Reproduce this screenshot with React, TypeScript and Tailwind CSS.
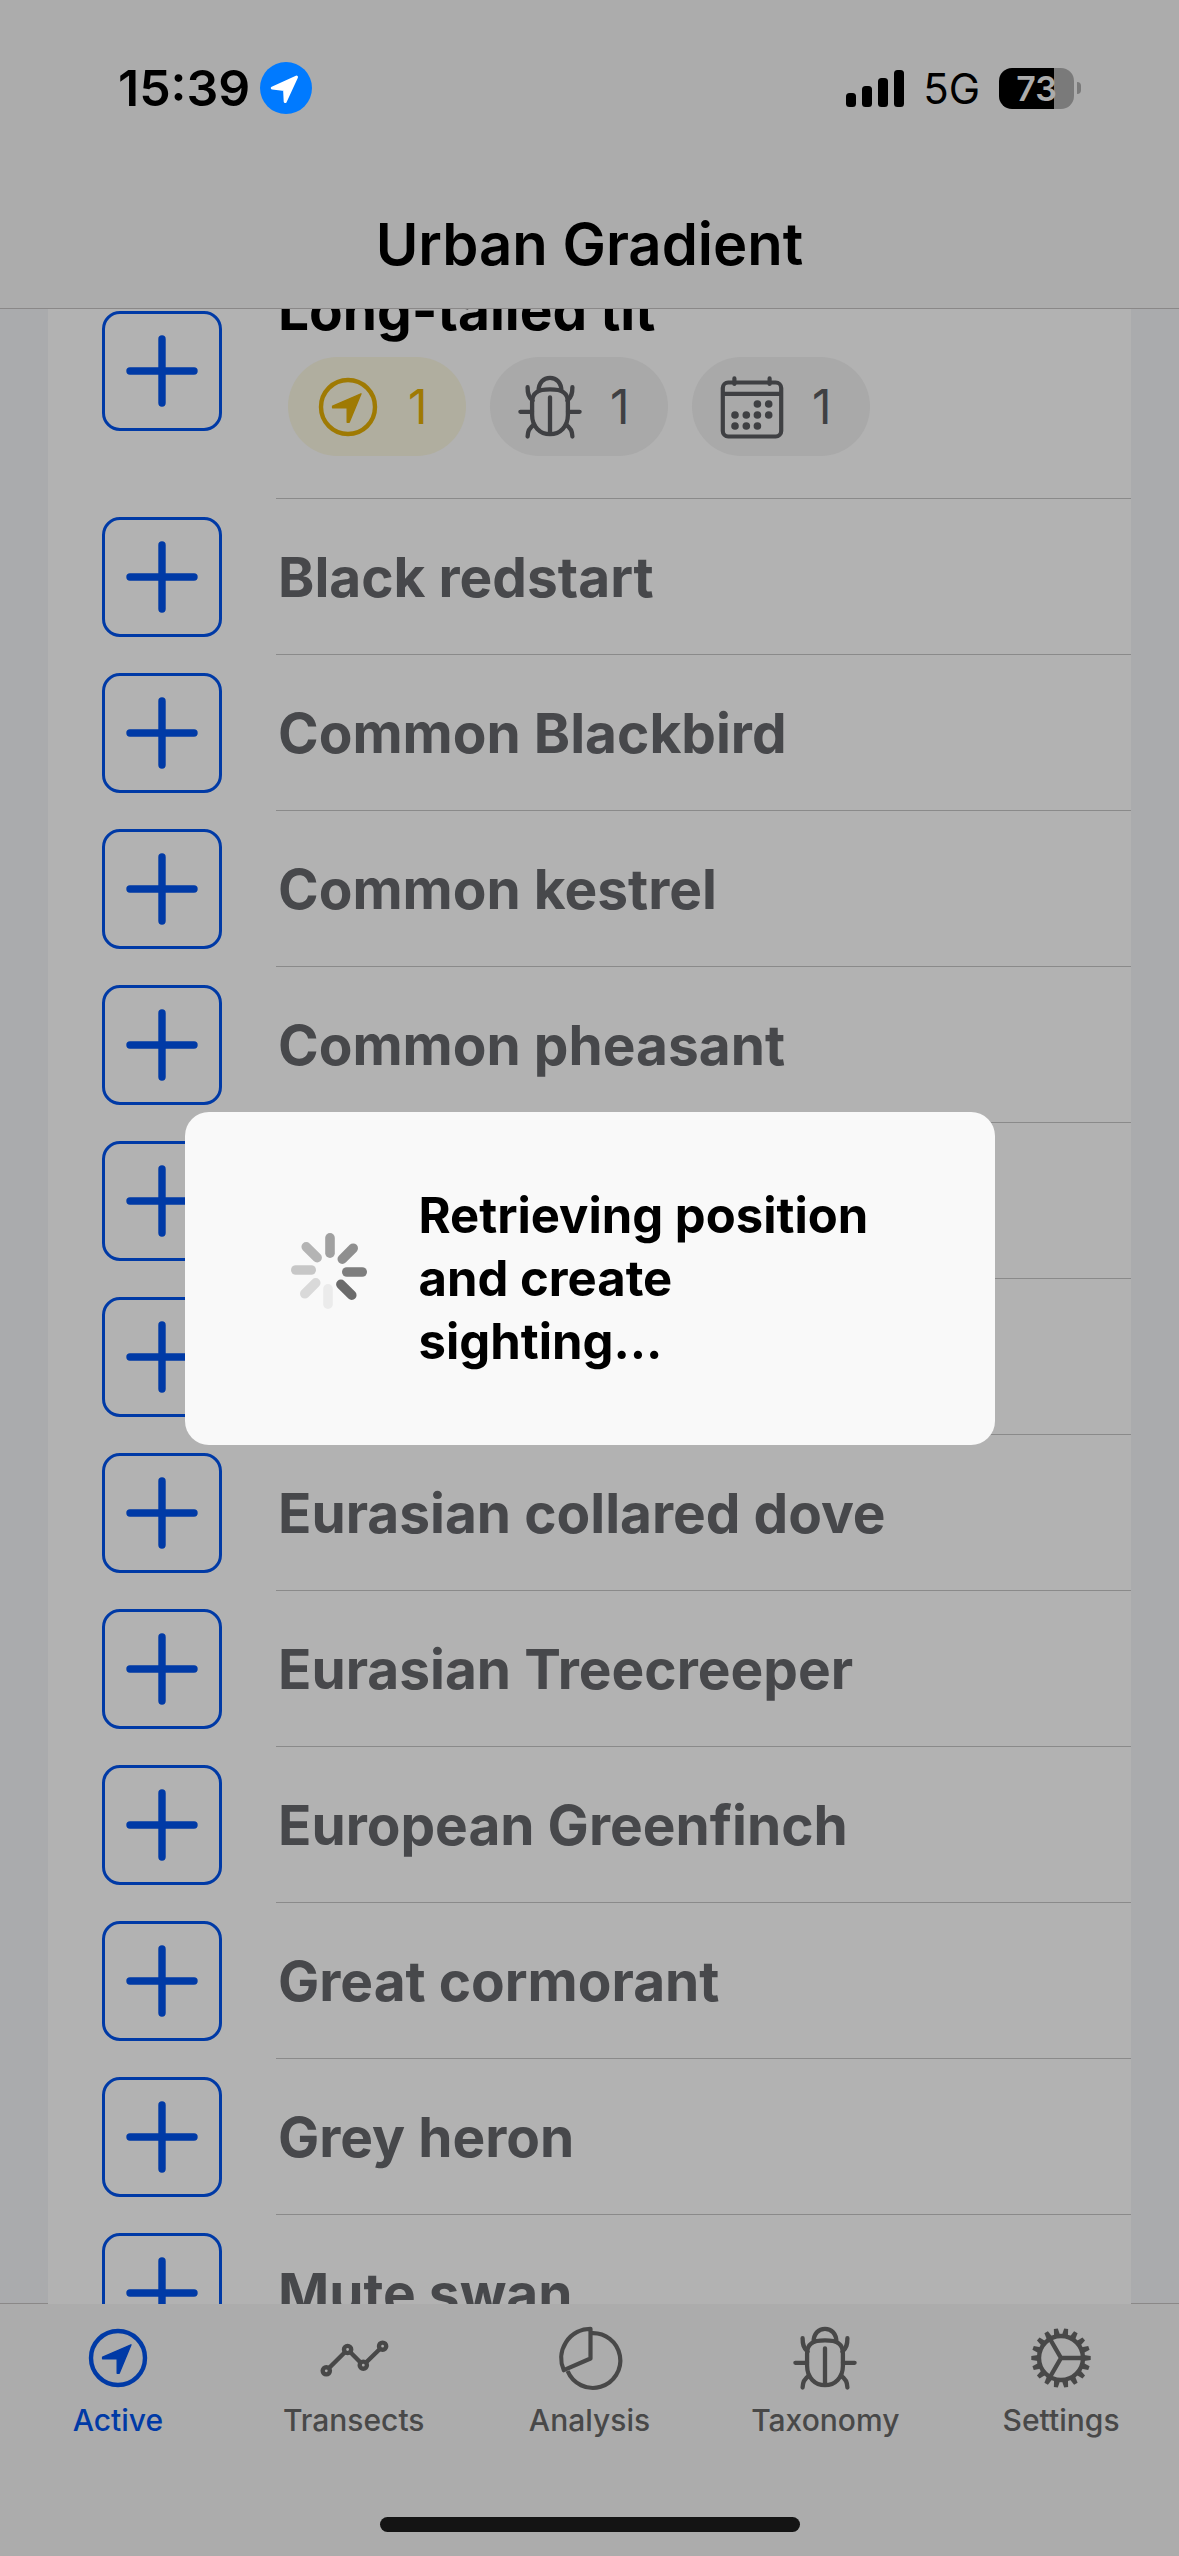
import type { ReactNode } from "react";

type IconProps = { className?: string };

function NavigationCircle({ className = "" }: IconProps) {
  return (
    <svg viewBox="0 0 64 64" className={`size-16 ${className}`} fill="none" stroke="currentColor" aria-hidden="true">
      <circle cx="32" cy="32" r="27" strokeWidth="4.4" />
      <path d="M45 18.8 16.6 31.2V32.8H31.2V47.2H33.2Z" fill="currentColor" strokeWidth="1.4" strokeLinejoin="round" />
    </svg>
  );
}

function Beetle({ className = "" }: IconProps) {
  return (
    <svg
      viewBox="0 0 64 64"
      className={`size-16 ${className}`}
      fill="none"
      stroke="currentColor"
      strokeWidth="4.3"
      strokeLinecap="round"
      strokeLinejoin="round"
      aria-hidden="true"
    >
      <path d="M20.6 16C20.6 7.6 25.6 2.8 32 2.8S43.4 7.6 43.4 16" />
      <path d="M14.1 27.5C14.1 17.5 20 14.4 32 14.4S49.9 17.5 49.9 27.5V40C49.9 51.5 42 59.2 32 59.2S14.1 51.5 14.1 40Z" />
      <path d="M32 22.3V58M2.4 36.8H14M50 36.8H61.6" />
      <path d="M9.6 12.2C9.6 18.5 10.4 22 14.6 25.6M54.4 12.2C54.4 18.5 53.6 22 49.4 25.6" />
      <path d="M9.6 61.6C9.6 56 11.6 52.4 16.2 49.6M54.4 61.6C54.4 56 52.4 52.4 47.8 49.6" />
    </svg>
  );
}

const calendarDots = [
  [37.4, 29],
  [48.7, 29],
  [15, 40],
  [26.3, 40],
  [37.4, 40],
  [48.7, 40],
  [15, 51],
  [26.3, 51],
  [37.4, 51],
];

function Calendar({ className = "" }: IconProps) {
  return (
    <svg viewBox="0 0 64 64" className={`size-16 ${className}`} fill="none" stroke="currentColor" strokeWidth="4.2" aria-hidden="true">
      <rect x="2.8" y="7.5" width="58.4" height="54" rx="5.5" />
      <path d="M3 18.8H61" />
      <path d="M14.4 3.4V9M49.6 3.4V9" strokeLinecap="round" />
      {calendarDots.map(([x, y]) => (
        <circle key={`${x}-${y}`} cx={x} cy={y} r="3.8" fill="currentColor" stroke="none" />
      ))}
    </svg>
  );
}

function Transects({ className = "" }: IconProps) {
  return (
    <svg viewBox="0 0 64 64" className={`size-16 overflow-visible ${className}`} fill="none" stroke="currentColor" strokeWidth="4.4" aria-hidden="true">
      <path d="M6.8 42.3 23.1 26M28.1 26 38.8 36.7M43.8 36.7 58.1 22.7" />
      <circle cx="4.3" cy="44.8" r="3.6" />
      <circle cx="25.6" cy="23.5" r="3.6" />
      <circle cx="41.3" cy="39.2" r="3.6" />
      <circle cx="60.6" cy="20.2" r="3.6" />
    </svg>
  );
}

function PieChart({ className = "" }: IconProps) {
  return (
    <svg viewBox="0 0 64 64" className={`size-16 overflow-visible ${className}`} fill="none" stroke="currentColor" strokeWidth="4.2" strokeLinejoin="round" aria-hidden="true">
      <path d="M34 7.2A27.4 27.4 0 1 1 10.6 45" />
      <path d="M33.5 2.8V32.5L6.8 44.2A29.4 29.4 0 0 1 33.5 2.8Z" />
    </svg>
  );
}

const gearTeeth = Array.from({ length: 18 }, (_, i) => i * 20);

function Gear({ className = "" }: IconProps) {
  return (
    <svg viewBox="-32 -32 64 64" className={`size-16 ${className}`} fill="none" stroke="currentColor" strokeWidth="4.4" aria-hidden="true">
      <circle r="22" />
      <path d="M0 0H22M0 0-11 -19M0 0-11 19" />
      {gearTeeth.map((angle) => (
        <path key={angle} d="M23-3 29.7-2V2L23 3Z" fill="currentColor" stroke="none" transform={`rotate(${angle})`} />
      ))}
    </svg>
  );
}

const spinnerShades = ["#a0a0a0", "#8f8f8f", "#7e7e7e", "#6b6b6b", "#ebebeb", "#d9d9d9", "#c7c7c7", "#b4b4b4"];

function Spinner() {
  return (
    <svg viewBox="-40 -40 80 80" className="mb-3.5 size-20 shrink-0" role="img" aria-label="Loading">
      {spinnerShades.map((shade, i) => (
        <rect key={shade} x="-3.8" y="-38" width="9.6" height="25" rx="4.8" fill={shade} transform={`rotate(${i * 45})`} />
      ))}
    </svg>
  );
}

function StatusBar() {
  return (
    <div className="flex h-13 items-center justify-between pr-[98px] pl-[118px]">
      <div className="flex items-center gap-2.5">
        <span className="text-[50px] font-semibold">15:39</span>
        <svg viewBox="0 0 52 52" className="size-13" aria-hidden="true">
          <circle cx="26" cy="26" r="26" fill="#007aff" />
          <path d="M36.5 15 12.3 26.1 24.6 27.4 25.2 39.6Z" fill="#fff" stroke="#fff" strokeWidth="3" strokeLinejoin="round" />
        </svg>
      </div>
      <div className="flex items-center gap-[19px]">
        <svg viewBox="0 0 58 37" className="h-[37px] w-[58px]" aria-hidden="true">
          <rect x="0" y="23" width="10" height="14" rx="3.5" />
          <rect x="16" y="16" width="10" height="21" rx="3.5" />
          <rect x="32" y="8" width="10" height="29" rx="3.5" />
          <rect x="48" y="0" width="10" height="37" rx="3.5" />
        </svg>
        <span className="text-[42px]">5G</span>
        <div className="flex items-center gap-[3px]">
          <div className="flex h-[41px] w-[75px] items-center justify-center rounded-[13px] bg-linear-to-r from-black from-73% to-[#7a7a7a] to-73%">
            <span className="text-[34px] font-semibold text-[#acacac]">73</span>
          </div>
          <div className="h-3 w-1 rounded-r-full bg-[#7a7a7a]" />
        </div>
      </div>
    </div>
  );
}

function AddButton({ name }: { name: string }) {
  return (
    <button
      type="button"
      aria-label={name ? `Add ${name}` : "Add sighting"}
      className="flex size-30 shrink-0 items-center justify-center rounded-[18px] border-3 border-[#003aa6] text-[#003aa6]"
    >
      <svg viewBox="0 0 72 72" className="size-18" stroke="currentColor" strokeWidth="7.4" strokeLinecap="round" aria-hidden="true">
        <path d="M36 4V68M4 36H68" />
      </svg>
    </button>
  );
}

function Chip({ icon, className, count }: { icon: ReactNode; className: string; count: number }) {
  return (
    <span className={`flex h-[99px] w-[178px] items-center gap-7 rounded-full pl-7 text-[48px] ${className}`}>
      {icon}
      {count}
    </span>
  );
}

const species = [
  "Black redstart",
  "Common Blackbird",
  "Common kestrel",
  "Common pheasant",
  "",
  "",
  "Eurasian collared dove",
  "Eurasian Treecreeper",
  "European Greenfinch",
  "Great cormorant",
  "Grey heron",
  "Mute swan",
];

function SpeciesList() {
  return (
    <ul className="min-w-0 flex-1 overflow-hidden bg-[#b2b2b2]">
      <li className="-mt-[66px] flex h-64 gap-[54px] pl-[54px]">
        <div className="flex items-center">
          <AddButton name="Long-tailed tit" />
        </div>
        <div className="flex flex-1 flex-col justify-center gap-3.5 border-b border-[#8a8a8a] pb-2">
          <span className="pl-0.5 text-[55px]/[66px] font-bold">Long-tailed tit</span>
          <div className="flex gap-6 pl-3">
            <Chip icon={<NavigationCircle />} className="bg-[#b0ae9f] text-[#9f7a03]" count={1} />
            <Chip icon={<Beetle />} className="bg-[#a9a9a9] text-[#3f4043]" count={1} />
            <Chip icon={<Calendar />} className="bg-[#a9a9a9] text-[#3f4043]" count={1} />
          </div>
        </div>
      </li>
      {species.map((name, i) => (
        <li key={i} className="flex h-[156px] gap-[54px] pl-[54px]">
          <div className="flex items-center">
            <AddButton name={name} />
          </div>
          <div className="flex flex-1 items-center border-b border-[#8a8a8a]">
            <span className="pl-0.5 text-[55px]/[66px] font-bold text-[#47484b]">{name}</span>
          </div>
        </li>
      ))}
    </ul>
  );
}

const tabs = [
  { label: "Active", Icon: NavigationCircle },
  { label: "Transects", Icon: Transects },
  { label: "Analysis", Icon: PieChart },
  { label: "Taxonomy", Icon: Beetle },
  { label: "Settings", Icon: Gear },
];

export default function App() {
  return (
    <div className="relative flex h-screen flex-col overflow-hidden bg-[#aaabad] font-['Inter',sans-serif] text-black">
      <header className="flex h-[309px] shrink-0 flex-col border-b border-[#8a8888] bg-[#acacac] pt-[62px]">
        <StatusBar />
        <h1 className="mt-[94px] text-center text-[58px]/[72px] font-semibold">Urban Gradient</h1>
      </header>

      <main className="flex min-h-0 flex-1">
        <div className="w-12 shrink-0 border-b border-[#8a8888]" />
        <SpeciesList />
        <div className="w-12 shrink-0 border-b border-[#8a8888]" />
      </main>

      <nav className="flex h-[252px] shrink-0 flex-col justify-between bg-[#acacac] pt-[22px] pb-6">
        <div className="grid grid-cols-5">
          {tabs.map(({ label, Icon }, i) => (
            <button
              key={label}
              type="button"
              aria-current={i === 0 ? "page" : undefined}
              className="flex flex-col items-center gap-3 text-[30px]/[36px] font-medium text-[#484848] aria-[current=page]:text-[#003aa6]"
            >
              <Icon />
              {label}
            </button>
          ))}
        </div>
        <div className="h-[15px] w-[420px] self-center rounded-full bg-[#141414]" />
      </nav>

      <div className="absolute inset-0 flex items-center justify-center px-12">
        <div
          role="dialog"
          aria-label="Retrieving position"
          className="flex w-full max-w-[810px] items-center gap-[50px] rounded-3xl bg-[#f9f9f9] px-26 py-18"
        >
          <Spinner />
          <p className="text-[49px]/[63px] font-bold">Retrieving position and create sighting...</p>
        </div>
      </div>
    </div>
  );
}
